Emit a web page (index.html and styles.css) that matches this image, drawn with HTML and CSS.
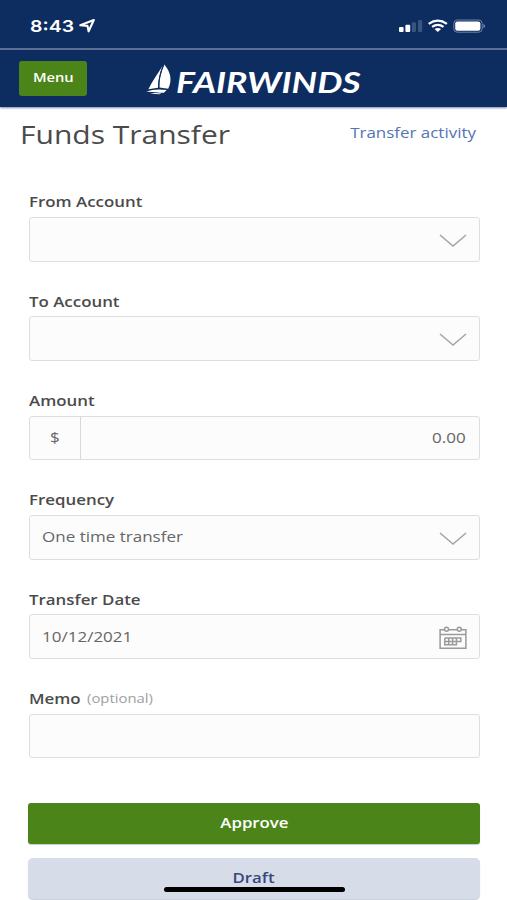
FILE: index.html
```html
<!DOCTYPE html>
<html lang="en">
<head>
<meta charset="utf-8">
<title>Funds Transfer</title>
<link rel="stylesheet" href="styles.css">
</head>
<body>
<div class="screen">
  <div class="status">
    <span class="time wide">8:43</span>
    <svg class="locate" width="17" height="14" viewBox="0 0 17 14"><path d="M1.3 6.3 14.8 1 9.6 12.4 8.5 6.9Z" fill="none" stroke="#fff" stroke-width="2.1" stroke-linejoin="round"/></svg>
    <svg class="signals" width="88" height="16" viewBox="0 0 88 16">
      <g fill="#fff"><rect x="0" y="9" width="4.6" height="5" rx="1"/><rect x="6.4" y="6.7" width="4.8" height="7.3" rx="1"/></g>
      <g fill="#38557f"><rect x="12.8" y="4.2" width="4.2" height="9.8" rx="1"/><rect x="19" y="2" width="4.2" height="12" rx="1"/></g>
      <g fill="none" stroke="#fff" stroke-width="2.3"><path d="M29.7 5.9Q38.8-.6 47.9 5.9"/><path d="M33.1 8.9Q38.8 4.8 44.5 8.9"/></g>
      <path d="M35.5 11.1Q38.8 8.8 42.1 11.1L38.8 14Z" fill="#fff"/>
      <rect x="54.8" y="2" width="28.4" height="12.2" rx="3.4" fill="none" stroke="#6f83a5" stroke-width="1"/>
      <rect x="56.2" y="3.4" width="25.2" height="9.4" rx="2.2" fill="#fff"/>
      <path d="M84.4 6q1.8.6 1.8 2.1t-1.8 2.1z" fill="#6f83a5"/>
    </svg>
  </div>
  <header class="nav">
    <button class="menu"><span class="wide">Menu</span></button>
    <div class="brand">
      <svg width="28" height="32" viewBox="0 0 28 32"><path d="M16.6 2C12 9 6.5 17 2.4 25.2l9.6-1.4C12.2 16 13.8 9 16.6 2Z" fill="#fff"/><path d="M18.2.4C24.4 7.5 26.6 16 22.2 24.8l-8.8-1.2C13 16 15 8 18.2.4Z" fill="#fff"/><path d="M17.6 1C14 9 12.4 17 12.7 25" fill="none" stroke="#0d2c60" stroke-width="1.1"/><path d="M.2 27.7c6-2.2 13-2.8 20.5-1.6l-2.8 2.6C13 29 8 27.5.2 27.7Z" fill="#fff"/><path d="M4 29.2q6-.4 11.5.2l-2 .9Q9 30 4 29.2Z" fill="#fff"/></svg>
      <span class="logotype wide">FAIRWINDS</span>
    </div>
  </header>
  <main>
    <div class="heading">
      <h1 class="wide">Funds Transfer</h1>
      <a class="activity wide">Transfer activity</a>
    </div>
    <form class="form">
      <div class="field">
        <div class="label"><span class="wide">From Account</span></div>
        <div class="box"><svg class="chev" width="28" height="14" viewBox="0 0 28 14"><path d="M1 1 14 12 27 1"/></svg></div>
      </div>
      <div class="field">
        <div class="label"><span class="wide">To Account</span></div>
        <div class="box"><svg class="chev" width="28" height="14" viewBox="0 0 28 14"><path d="M1 1 14 12 27 1"/></svg></div>
      </div>
      <div class="field">
        <div class="label"><span class="wide">Amount</span></div>
        <div class="box amount"><div class="currency"><span class="wide">$</span></div><span class="value wide">0.00</span></div>
      </div>
      <div class="field">
        <div class="label"><span class="wide">Frequency</span></div>
        <div class="box"><span class="wide">One time transfer</span><svg class="chev" width="28" height="14" viewBox="0 0 28 14"><path d="M1 1 14 12 27 1"/></svg></div>
      </div>
      <div class="field">
        <div class="label"><span class="wide">Transfer Date</span></div>
        <div class="box"><span class="wide">10/12/2021</span>
          <svg class="cal" width="28" height="24" viewBox="0 0 28 24"><g fill="none" stroke="#9a9a9a" stroke-width="1.5"><path d="M5 3.7H1.1V22.3H26.9V3.7H23M10 3.7h8M1.1 8.6H26.9"/><circle cx="7.5" cy="3.2" r="2"/><circle cx="20.3" cy="3.2" r="2"/><path d="M5.8 12H21.8V15.5H5.8M5.8 12v6.7H17.4V12M9.7 12v6.7M13.6 12v6.7"/></g></svg>
        </div>
      </div>
      <div class="field">
        <div class="label"><span class="wide">Memo</span><span class="optional wide">(optional)</span></div>
        <div class="box"></div>
      </div>
      <button class="btn approve" type="button"><span class="wide">Approve</span></button>
      <button class="btn draft" type="button"><span class="wide">Draft</span></button>
    </form>
  </main>
  <div class="home"></div>
</div>
</body>
</html>
```
FILE: styles.css
```css
* { box-sizing: border-box; }
body { margin: 0; background: #fff; font-family: "Open Sans", "Noto Sans", sans-serif; color: #4b4b4b; }
.screen { position: relative; width: 507px; height: 900px; overflow: hidden; }
.wide { display: inline-block; white-space: nowrap; transform: scaleX(1.2); transform-origin: left center; }

.status { height: 50px; background: #0d2c60; border-bottom: 2px solid #596f97; display: flex; align-items: flex-start; padding: 0 20px 0 30px; }
.time { width: 49px; margin-top: 16px; font: 600 16.5px/20px Inter, sans-serif; color: #fff; transform: scaleX(1.18); }
.locate { margin-top: 19px; }
.signals { margin: 18px 0 0 auto; }

.nav { height: 57px; background: #0d2c60; display: flex; align-items: flex-start; padding: 11px 19px; box-shadow: 0 1px 2px #7888a8; }
.menu { width: 68px; height: 35px; padding: 0 0 2px; border: 0; border-radius: 3px; background: #4b8519; color: #fff; font: 600 12.5px/18px "Open Sans", sans-serif; }
.menu .wide { transform: scaleX(1.18); transform-origin: center; }
.brand { display: flex; margin: 3px 0 0 59px; }
.logotype { margin: 1px 0 0 2px; font: italic 700 29px/34px Lato, sans-serif; color: #fff; transform: scaleX(1.228); }

.heading { height: 82px; display: flex; justify-content: space-between; padding: 10px 31px 0 20px; }
h1 { margin: 0; font-size: 25px; line-height: 34px; font-weight: 400; transform: scaleX(1.205); }
.activity { margin-top: 6px; font-size: 14px; line-height: 20px; color: #5474b4; transform: scaleX(1.21); transform-origin: right center; }

.form { padding: 0 28px 0 28px; }
.field { height: 99.35px; }
.label { height: 28px; padding: 3.2px 0 0 .7px; font-size: 13.5px; line-height: 20px; font-weight: 600; display: flex; }
.label .wide { transform: scaleX(1.25); }
.box { height: 44.5px; margin: 0 -.5px 0 .5px; border: 1.5px solid #dedede; border-radius: 3px; background: #fcfcfc; display: flex; align-items: center; padding: 0 11.5px 1px 12.5px; font-size: 14px; color: #666; }
.box .wide { transform: scaleX(1.215); }
.chev, .cal { margin-left: auto; position: relative; top: 2px; }
.chev { fill: none; stroke: #a4a4a4; stroke-width: 1.5; }
.amount { padding: 0 12.5px 0 0; }
.currency { width: 51px; height: 100%; border-right: 1px solid #d8d8d8; display: flex; align-items: center; justify-content: center; }
.value { margin-left: auto; transform-origin: right center; }
.label .optional { margin-left: 17px; font-size: 12.5px; font-weight: 400; color: #a0a0a0; transform: scaleX(1.19); }
.btn { display: flex; width: 452px; height: 41px; margin: 0; padding: 0 0 1px; border: 0; border-radius: 3px; align-items: center; justify-content: center; font: 600 14px/20px "Open Sans", sans-serif; box-shadow: 0 1px 1px #c4cbd5; }
.btn .wide { transform-origin: center; }
.approve { margin-top: 18px; background: #4b8519; color: #fff; }
.draft { margin-top: 14px; background: #d6dde8; color: #39487a; border-radius: 5px; }
.home { position: absolute; left: 163.5px; top: 887px; width: 181px; height: 5px; border-radius: 3px; background: #000; }
```
